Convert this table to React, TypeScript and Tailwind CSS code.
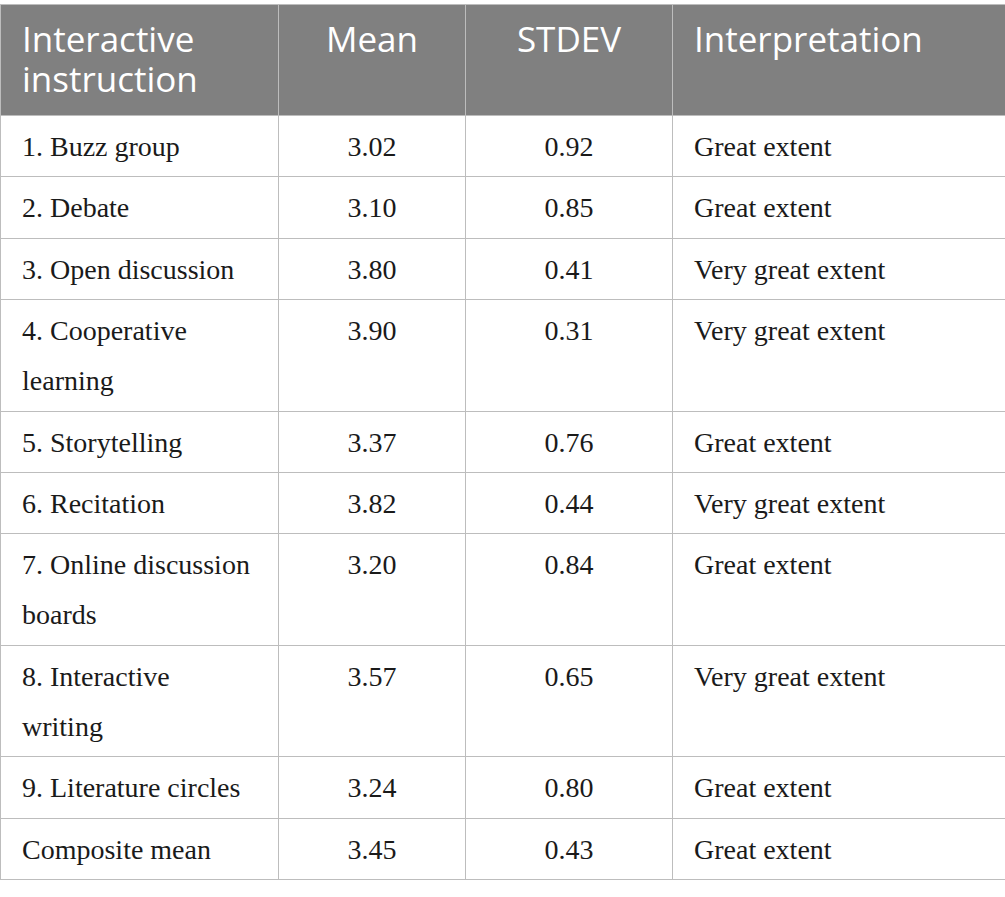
import React from 'react';

const rows: string[][] = [
  ['1. Buzz group', '3.02', '0.92', 'Great extent'],
  ['2. Debate', '3.10', '0.85', 'Great extent'],
  ['3. Open discussion', '3.80', '0.41', 'Very great extent'],
  ['4. Cooperative|learning', '3.90', '0.31', 'Very great extent'],
  ['5. Storytelling', '3.37', '0.76', 'Great extent'],
  ['6. Recitation', '3.82', '0.44', 'Very great extent'],
  ['7. Online discussion|boards', '3.20', '0.84', 'Great extent'],
  ['8. Interactive|writing', '3.57', '0.65', 'Very great extent'],
  ['9. Literature circles', '3.24', '0.80', 'Great extent'],
  ['Composite mean', '3.45', '0.43', 'Great extent'],
];

const App = () => {
  return (
    <div className="w-[1005px] h-[897px] bg-white pt-[4px]">
      <table className="w-[1005px] table-fixed border-collapse">
        <colgroup>
          <col className="w-[278px]" />
          <col className="w-[187px]" />
          <col className="w-[207px]" />
          <col className="w-[333px]" />
        </colgroup>
        <thead>
          <tr className="bg-[#808080] text-white font-['Open_Sans',sans-serif] text-[35px] leading-[40px]">
            <th className="border border-[#bdbdbd] pl-[21px] pr-[8px] pt-[14px] pb-[16px] text-left align-top font-normal">
              Interactive
              <br />
              instruction
            </th>
            <th className="border border-[#bdbdbd] px-[8px] pt-[14px] pb-[16px] text-center align-top font-normal">
              Mean
            </th>
            <th className="border border-[#bdbdbd] px-[8px] pt-[14px] pb-[16px] text-center align-top font-normal">
              STDEV
            </th>
            <th className="border border-[#bdbdbd] pl-[21px] pr-[8px] pt-[14px] pb-[16px] text-left align-top font-normal">
              Interpretation
            </th>
          </tr>
        </thead>
        <tbody className="font-['Liberation_Serif',serif] text-[28px] leading-[50px] text-[#1a1a1a]">
          {rows.map((r) => (
            <tr key={r[0]}>
              <td className="border border-[#bdbdbd] pl-[21px] pr-[4px] pt-[6px] pb-[4.4px] align-top whitespace-nowrap">
                {r[0].split('|').map((line, i) => (
                  <div key={i}>{line}</div>
                ))}
              </td>
              <td className="border border-[#bdbdbd] px-[8px] pt-[6px] pb-[4.4px] text-center align-top">{r[1]}</td>
              <td className="border border-[#bdbdbd] px-[8px] pt-[6px] pb-[4.4px] text-center align-top">{r[2]}</td>
              <td className="border border-[#bdbdbd] pl-[21px] pr-[8px] pt-[6px] pb-[4.4px] align-top">{r[3]}</td>
            </tr>
          ))}
        </tbody>
      </table>
    </div>
  );
};

export default App;
